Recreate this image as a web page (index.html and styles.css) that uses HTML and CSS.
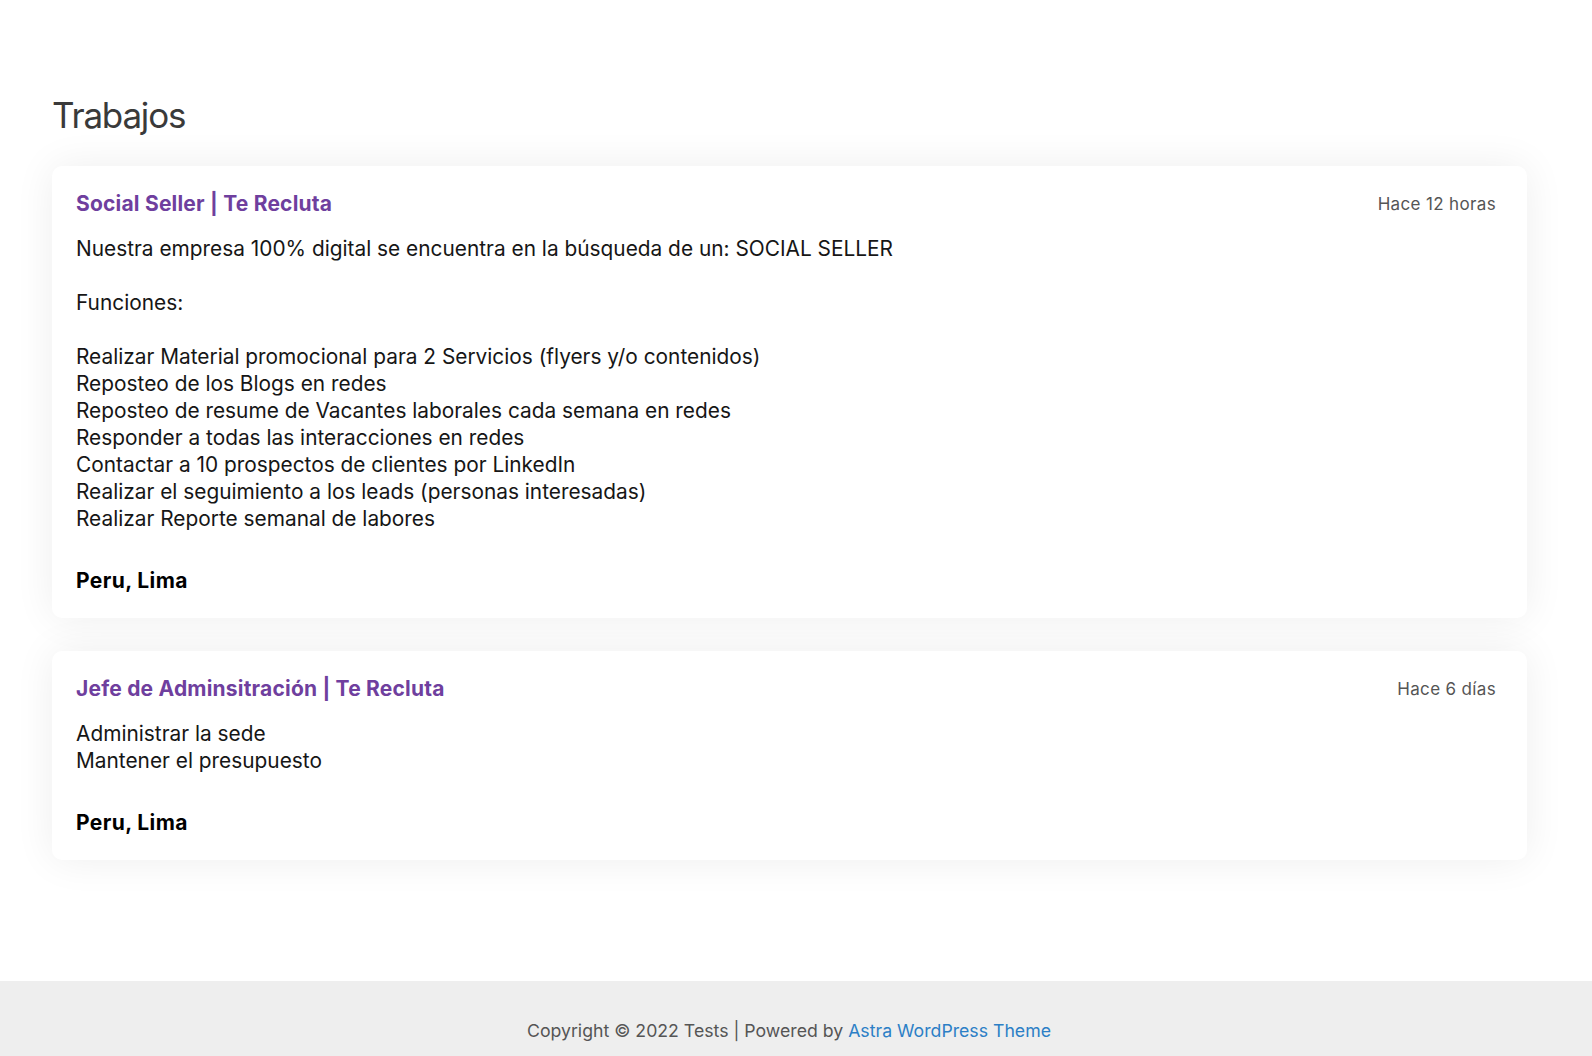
FILE: index.html
```html
<!DOCTYPE html>
<html lang="es">
<head>
<meta charset="utf-8">
<title>Trabajos</title>
<link rel="stylesheet" href="styles.css">
</head>
<body>
<main class="content">
  <h1 class="page-title">Trabajos</h1>
  <article class="job">
    <header class="job-head">
      <a class="job-title" href="#">Social Seller | Te Recluta</a>
      <span class="job-time">Hace 12 horas</span>
    </header>
    <div class="job-desc">Nuestra empresa 100% digital se encuentra en la búsqueda de un: SOCIAL SELLER<br><br>Funciones:<br><br>Realizar Material promocional para 2 Servicios (flyers y/o contenidos)<br>Reposteo de los Blogs en redes<br>Reposteo de resume de Vacantes laborales cada semana en redes<br>Responder a todas las interacciones en redes<br>Contactar a 10 prospectos de clientes por LinkedIn<br>Realizar el seguimiento a los leads (personas interesadas)<br>Realizar Reporte semanal de labores</div>
    <p class="job-loc">Peru, Lima</p>
  </article>
  <article class="job">
    <header class="job-head">
      <a class="job-title" href="#">Jefe de Adminsitración | Te Recluta</a>
      <span class="job-time">Hace 6 días</span>
    </header>
    <div class="job-desc">Administrar la sede<br>Mantener el presupuesto</div>
    <p class="job-loc">Peru, Lima</p>
  </article>
</main>
<footer class="site-footer">
  <p class="footer-text">Copyright © 2022 Tests | Powered by <a class="footer-link" href="#">Astra WordPress Theme</a></p>
</footer>
</body>
</html>
```
FILE: styles.css
```css
* { box-sizing: border-box; }
html, body { margin: 0; padding: 0; }
body {
  font-family: Inter, "Noto Sans", "Liberation Sans", sans-serif;
  background: #ffffff;
  color: #111111;
  min-height: 1056px;
  display: flex;
  flex-direction: column;
}
.content {
  width: 1475px;
  margin-left: 52px;
  padding-top: 94px;
  padding-bottom: 121px;
  display: flex;
  flex-direction: column;
  gap: 33px;
}
.page-title {
  margin: 0 0 -4px 0;
  font-size: 35px;
  font-weight: 400;
  line-height: 43px;
  color: #3a3a3a;
  letter-spacing: -1.2px;
}
.job {
  background: #ffffff;
  border-radius: 10px;
  box-shadow: 0 0 40px rgba(0, 0, 0, 0.07);
  padding: 24px 31px 24px 24px;
}
.job-head {
  display: flex;
  justify-content: space-between;
  align-items: center;
  height: 27px;
}
.job-title {
  font-size: 21px;
  font-weight: 700;
  color: #6f3f9e;
  text-decoration: none;
  letter-spacing: 0.2px;
}
.job-time {
  font-size: 17px;
  color: #555555;
  letter-spacing: 0.35px;
}
.job-desc {
  margin-top: 18px;
  font-size: 20.85px;
  line-height: 27px;
  color: #161616;
}
.job-loc {
  margin: 35px 0 0 0;
  font-size: 21px;
  line-height: 27px;
  font-weight: 700;
  color: #000000;
  letter-spacing: 0.4px;
}
.site-footer {
  flex: 1;
  background: #eeeeee;
  padding: 37px 14px 0 0;
  text-align: center;
}
.footer-text {
  margin: 0;
  font-size: 17.7px;
  line-height: 26px;
  color: #555555;
}
.footer-link {
  color: #2c7fc6;
  text-decoration: none;
}
```
